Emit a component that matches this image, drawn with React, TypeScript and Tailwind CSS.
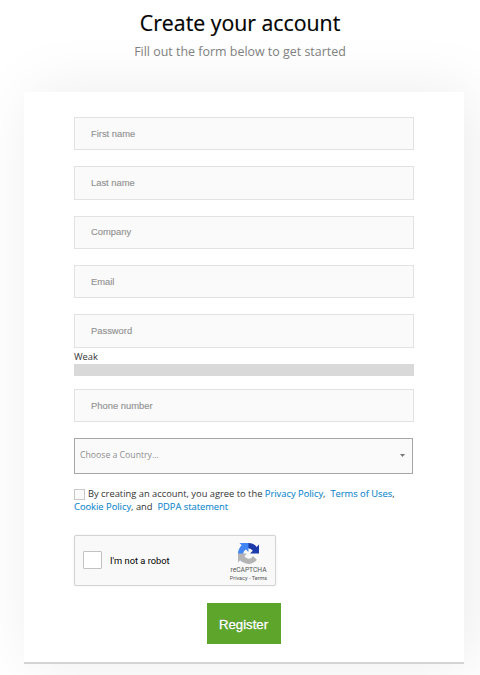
import React from 'react';

const sans = "font-['Open_Sans',sans-serif]";
const arial = "font-['Liberation_Sans',Arial,sans-serif]";

function Field({ label, className }: { label: string; className: string }) {
  return (
    <input
      placeholder={label}
      aria-label={label}
      className={`block w-[340px] rounded-none border border-[#e2e2e2] bg-[#fafafa] px-4 text-[9.4px] text-[#333] outline-none [-webkit-text-stroke:0.15px_#939393] placeholder:text-[#939393] placeholder:opacity-100 ${arial} ${className}`}
    />
  );
}

function Link({ children }: { children: React.ReactNode }) {
  return <a href="#" className="text-[#0f87cc] [-webkit-text-stroke:0.1px_#0f87cc]">{children}</a>;
}

function RecaptchaLogo() {
  return (
    <svg viewBox="0 0 64 64" className="h-[21px] w-[21px]">
      <path fill="#1c3aa9" d="M64 31.955l-.033-1.37V4.687l-7.16 7.16C50.948 4.674 42.033.093 32.05.093c-10.4 0-19.622 4.96-25.458 12.64l11.736 11.86a15.55 15.55 0 0 1 4.754-5.334c2.05-1.6 4.952-2.906 8.968-2.906.485 0 .86.057 1.135.163 4.976.393 9.288 3.14 11.828 7.124l-8.307 8.307L64 31.953" />
      <path fill="#4285f4" d="M31.862.094l-1.37.033H4.594l7.16 7.16C4.58 13.147 0 22.06 0 32.046c0 10.4 4.96 19.622 12.64 25.458L24.5 45.768a15.55 15.55 0 0 1-5.334-4.754c-1.6-2.05-2.906-4.952-2.906-8.968 0-.485.057-.86.163-1.135.393-4.976 3.14-9.288 7.124-11.828l8.307 8.307L31.86.095" />
      <path fill="#b4b4b4" d="M.001 32.045l.033 1.37v25.898l7.16-7.16c5.86 7.173 14.774 11.754 24.76 11.754 10.4 0 19.622-4.96 25.458-12.64l-11.736-11.86a15.55 15.55 0 0 1-4.754 5.334c-2.05 1.6-4.952 2.906-8.968 2.906-.485 0-.86-.057-1.135-.163-4.976-.393-9.288-3.14-11.828-7.124l8.307-8.307c-10.522.04-22.4.066-27.295-.005" />
    </svg>
  );
}

export default function App() {
  return (
    <div className={`h-[675px] w-[480px] overflow-hidden bg-white ${sans}`}>
      <header className="h-[92px] pt-[8px] text-center">
        <h1 className="text-[21.3px] leading-[30px] whitespace-nowrap text-black [-webkit-text-stroke:0.2px_black]">Create your account</h1>
        <p className="mt-[5px] text-[12.45px] leading-[18px] whitespace-nowrap text-[#808080]">Fill out the form below to get started</p>
      </header>
      <main className="ml-6 h-[572px] w-[440px] border-b-2 border-[#d3d3d3] bg-white pt-[25px] pl-[50px] shadow-[8px_0_60px_rgba(0,0,0,0.08)]">
        <Field label="First name" className="h-[33px]" />
        <Field label="Last name" className="mt-4 h-[34px] pb-[2px]" />
        <Field label="Company" className="mt-4 h-[33px] pb-[2px]" />
        <Field label="Email" className="mt-4 h-[33px]" />
        <Field label="Password" className="mt-4 h-[34px] pb-[2px]" />
        <div className="h-4 pt-[2px] text-[9.3px] leading-[13px] text-[#333]">Weak</div>
        <div className="h-3 w-[340px] bg-[#d9d9d9]" />
        <Field label="Phone number" className="mt-[13px] h-[33px]" />
        <div className="mt-4 flex h-9 w-[339px] items-center justify-between border border-[#a6a6a6] bg-[#fafafa] pr-[7px] pl-[5px] text-[8.7px] text-[#8e8e8e]">
          <span>Choose a Country...</span>
          <svg viewBox="0 0 5 3" className="-mt-px h-[3px] w-[5px]"><path fill="#777" d="M0 0h5L2.5 3z" /></svg>
        </div>
        <div className="mt-[13px] h-[26px] text-[9.33px] leading-[13px] whitespace-pre text-[#333]">
          <div className="flex">
            <span className="mt-[2px] mr-[3px] h-[11px] w-[11px] shrink-0 border border-[#c9c9c9] bg-[#fafafa]" />
            <span>By creating an account, you agree to the <Link>Privacy Policy</Link>,{'  '}<Link>Terms of Uses</Link>,</span>
          </div>
          <div><Link>Cookie Policy</Link>, and{'  '}<Link>PDPA statement</Link></div>
        </div>
        <div className="mt-[22px] flex h-[51px] w-[202px] justify-between rounded-[2px] border border-[#d3d3d3] bg-[#f9f9f9] pr-[5px] pl-2 font-[Roboto,sans-serif] shadow-[0_0_2px_rgba(0,0,0,0.1)]">
          <div className="flex gap-2">
            <span className="mt-[15px] h-[18px] w-[19px] rounded-[1px] border border-[#c1c1c1] bg-white" />
            <span className="mt-[18px] text-[9.3px] leading-[14px] text-black">I'm not a robot</span>
          </div>
          <div className="flex w-[43px] flex-col items-center pt-[7px] text-[#555]">
            <RecaptchaLogo />
            <span className="mt-[2px] text-[6.7px] leading-[8px]">reCAPTCHA</span>
            <span className="mt-[1px] text-[5.5px] leading-[7px] whitespace-nowrap">Privacy - Terms</span>
          </div>
        </div>
        <button className={`mt-[17px] ml-[133px] block h-[41px] w-[74px] bg-[#5da52b] pt-[2px] pr-px text-[13.2px] text-white [-webkit-text-stroke:0.3px_white] [text-shadow:0_-1px_0_rgba(0,0,0,0.2)] ${arial}`}>Register</button>
      </main>
    </div>
  );
}
